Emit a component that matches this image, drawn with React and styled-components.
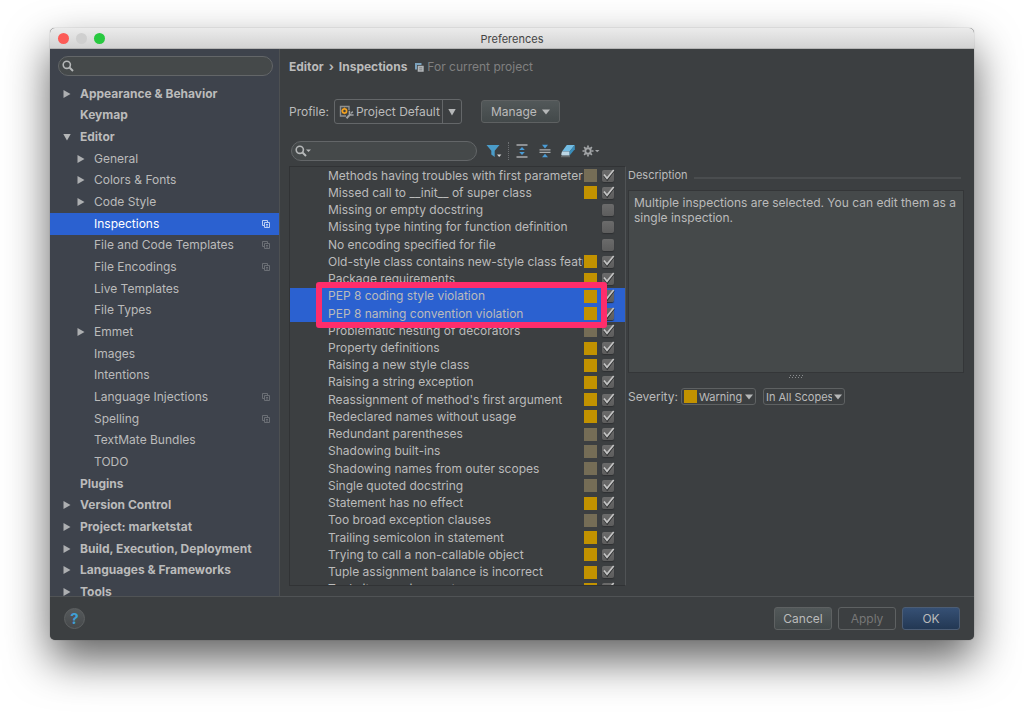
import React, { useState } from "react"
import styled, { createGlobalStyle } from "styled-components"

const GlobalStyle = createGlobalStyle`
  * {
    box-sizing: border-box;
  }

  body {
    margin: 0;
    background: #fff;
    color: #bbb;
    font-family: Inter, "Liberation Sans", sans-serif;
    font-size: 12px;
    line-height: 16px;
  }

  button,
  input,
  select {
    margin: 0;
    color: inherit;
    font: inherit;
  }

  svg {
    display: block;
    flex: none;
  }
`

const Page = styled.div`
  display: flex;
  height: 100vh;
  min-height: 480px;
  padding: 28px 50px 72px;
`

const Window = styled.main`
  display: flex;
  flex: 1;
  flex-direction: column;
  min-width: 0;
  overflow: hidden;
  border-radius: 5px;
  background: #3c3f41;
  box-shadow: 0 0 1px rgba(0, 0, 0, 0.5), 0 20px 44px rgba(0, 0, 0, 0.62);
`

const TitleBar = styled.header`
  display: grid;
  grid-template-columns: 1fr auto 1fr;
  align-items: center;
  height: 21px;
  padding: 1px 8px 0;
  border-bottom: 1px solid #b4b4b4;
  background: linear-gradient(#ebebeb, #d3d3d3);
`

const Lights = styled.div`
  display: flex;
  gap: 7px;
`

const Light = styled.button`
  width: 11px;
  height: 11px;
  padding: 0;
  border: 0;
  border-radius: 50%;
  background: ${({ $color }) => $color};
`

const Title = styled.h1`
  margin: 0;
  color: #444;
  font-size: 11px;
  font-weight: 400;
`

const Body = styled.div`
  display: flex;
  flex: 1;
  min-height: 0;
`

const Sidebar = styled.nav`
  display: flex;
  flex: 0 0 230px;
  flex-direction: column;
  gap: 7px;
  padding-top: 7px;
  overflow: hidden;
  border-right: 1px solid #4d5052;
  background: #3e434c;
`

const SearchBox = styled.label`
  display: flex;
  align-items: center;
  flex: none;
  gap: 4px;
  width: ${({ $width }) => $width || "auto"};
  height: 20px;
  margin: ${({ $margin }) => $margin || 0};
  padding: 0 3px;
  border: 1px solid #636668;
  border-radius: 10px;
  background: #45494a;

  input {
    flex: 1;
    min-width: 0;
    padding: 0;
    border: 0;
    outline: 0;
    background: none;
  }
`

const TreeScroll = styled.div`
  flex: 1;
  min-height: 0;
  overflow: hidden;
`

const Tree = styled.ul`
  display: grid;
  grid-auto-rows: 1fr;
  height: calc(100% + 7px);
  margin: 0;
  padding: 0;
  list-style: none;
`

const TreeRow = styled.button`
  display: flex;
  align-items: center;
  width: 100%;
  height: 100%;
  padding: 0 8px 0 ${({ $level }) => ($level ? 27 : 13)}px;
  border: 0;
  background: ${({ $selected }) => ($selected ? "#2b61d0" : "none")};
  color: ${({ $selected }) => ($selected ? "#fff" : "#bbb")};
  font-weight: ${({ $level }) => ($level ? 400 : 700)};
  text-align: left;

  svg:last-child {
    color: ${({ $selected }) => ($selected ? "#b9cdf3" : "#6b6f75")};
  }
`

const ArrowSlot = styled.span`
  flex: none;
  width: 17px;
`

const TreeLabel = styled.span`
  flex: 1;
  white-space: nowrap;
`

const Content = styled.section`
  display: flex;
  flex: 1;
  flex-direction: column;
  min-width: 0;
  padding: 9px 10px 10px 9px;
`

const Breadcrumb = styled.h2`
  display: flex;
  align-items: center;
  gap: 5px;
  margin: 0;
  font-size: 12px;
  font-weight: 700;
  line-height: 18px;
`

const Scope = styled.span`
  display: flex;
  align-items: center;
  gap: 3px;
  margin-left: 3px;
  color: #808080;
  font-weight: 400;
`

const ProfileRow = styled.div`
  display: flex;
  align-items: center;
  gap: 5px;
  margin-top: 23px;
`

const ProfileSelect = styled.div`
  display: flex;
  align-items: center;
  height: 25px;
  margin-right: 14px;
  padding-left: 4px;
  border: 1px solid #646769;
  border-radius: 3px;

  select {
    appearance: none;
    width: 88px;
    padding: 0 0 0 2px;
    border: 0;
    outline: 0;
    background: none;
  }
`

const ArrowBox = styled.span`
  display: flex;
  align-items: center;
  justify-content: center;
  width: 19px;
  height: 100%;
  border-left: 1px solid #646769;
`

const Button = styled.button`
  display: flex;
  align-items: center;
  justify-content: center;
  gap: 5px;
  min-width: ${({ $width }) => $width}px;
  height: 23px;
  padding: 0 8px;
  border: 1px solid ${({ $primary }) => ($primary ? "#4c5d75" : "#5e6162")};
  border-radius: 3px;
  background: ${({ $primary, disabled }) =>
    disabled
      ? "none"
      : $primary
      ? "linear-gradient(#365074, #233854)"
      : "linear-gradient(#525859, #43494a)"};
  color: ${({ disabled }) => (disabled ? "#777" : "#bbb")};
`

const Toolbar = styled.div`
  display: flex;
  align-items: center;
  margin-top: 17px;
  padding-left: 2px;
`

const ToolButton = styled.button`
  display: flex;
  align-items: center;
  justify-content: center;
  width: 23px;
  height: 20px;
  padding: 0;
  border: 0;
  background: none;
`

const ToolGroup = styled.div`
  display: flex;
  align-items: center;
  margin-left: 5px;
`

const ToolSeparator = styled.span`
  height: 18px;
  margin: 0 1px 0 3px;
  border-left: 1px dotted #6c6f71;
`

const Panels = styled.div`
  display: flex;
  flex: 1;
  gap: 2px;
  min-height: 0;
  margin-top: 5px;
`

const ListFrame = styled.div`
  flex: 0 0 337px;
  overflow: hidden;
  border: 1px solid #313335;
  border-right-color: #505355;
`

const InspectionList = styled.ul`
  position: relative;
  display: grid;
  grid-template-rows: repeat(${({ $count }) => $count}, 1fr);
  grid-template-columns: minmax(0, 1fr);
  height: calc(100% + 13px);
  margin: 0;
  padding: 0;
  list-style: none;
`

const InspectionRow = styled.li`
  display: flex;
  align-items: center;
  min-height: 0;
  padding: 0 10px 0 38px;
  background: ${({ $selected }) => ($selected ? "#2b61d0" : "none")};

  label {
    display: flex;
    align-items: center;
    flex: 1;
    gap: 1px;
    min-width: 0;
  }
`

const InspectionName = styled.span`
  flex: 1;
  overflow: hidden;
  white-space: nowrap;
`

const Swatch = styled.span`
  flex: none;
  width: 13px;
  height: 13px;
  background: ${({ $level }) =>
    ({ warning: "#c29200", weak: "#756d56" }[$level] || "none")};
`

const Check = styled.span`
  display: grid;
  flex: none;
  margin-left: 3px;

  input,
  svg {
    grid-area: 1 / 1;
  }

  input {
    appearance: none;
    width: 12px;
    height: 12px;
    margin: 1px;
    border-radius: 2px;
    background: linear-gradient(#6b6b6b, #5d5d5d);
    box-shadow: 0 1px 1px #2e3032;
  }

  svg {
    z-index: 1;
    pointer-events: none;
  }
`

const Highlight = styled.li`
  position: absolute;
  z-index: 2;
  grid-row: ${({ $from }) => $from} / span 2;
  inset: -6px 18px -6px 26px;
  border: 6px solid #ff2d6b;
  border-radius: 3px;
  pointer-events: none;
`

const Details = styled.div`
  display: flex;
  flex: 1;
  flex-direction: column;
  min-width: 0;
  padding-top: 1px;
`

const GroupTitle = styled.h3`
  display: flex;
  align-items: center;
  gap: 6px;
  margin: 0 3px 7px 0;
  font-size: 11px;
  font-weight: 400;

  &::after {
    flex: 1;
    height: 2px;
    margin-top: 5px;
    background: #4a4d4f;
    content: "";
  }
`

const Description = styled.div`
  height: 183px;
  padding: 4px 5px;
  border: 1px solid #343638;
  background: #45494a;
  line-height: 15px;
`

const Grip = styled.div`
  align-self: center;
  padding-top: 1px;
`

const SeverityRow = styled.div`
  display: flex;
  align-items: center;
  gap: 3px;
  margin-top: 9px;
`

const SmallSelect = styled.span`
  display: flex;
  align-items: center;
  gap: 2px;
  height: 17px;
  margin-right: 4px;
  padding: 0 2px;
  border: 1px solid #5e6162;
  border-radius: 3px;
  font-size: 11px;

  select {
    appearance: none;
    width: ${({ $width }) => $width}px;
    padding: 0;
    border: 0;
    outline: 0;
    background: none;
  }
`

const Footer = styled.footer`
  display: flex;
  align-items: center;
  gap: 6px;
  flex: none;
  height: 44px;
  padding: 0 14px;
  border-top: 1px solid #505355;
`

const HelpButton = styled.button`
  width: 21px;
  height: 21px;
  margin-right: auto;
  padding: 0;
  border: 1px solid #5e6162;
  border-radius: 50%;
  background: linear-gradient(#55595b, #46494b);
  color: #3f9fd6;
  font-size: 15px;
  font-weight: 700;
  line-height: 18px;
`

const SearchIcon = ({ menu }) => (
  <svg width={menu ? 17 : 12} height="12" viewBox={menu ? "0 0 17 12" : "0 0 12 12"}>
    <circle cx="4.8" cy="4.8" r="3.6" fill="none" stroke="#b5b7b8" strokeWidth="1.6" />
    <path d="M7.5 7.5L11 11" stroke="#b5b7b8" strokeWidth="2" />
    {menu && <path d="M11 4.5h5L13.5 7z" fill="#b5b7b8" />}
  </svg>
)

const RightArrow = () => (
  <svg width="8" height="8" viewBox="0 0 8 8">
    <path d="M0.5 0L7.5 4L0.5 8z" fill="#adafb1" />
  </svg>
)

const DownArrow = ({ flat }) => (
  <svg width="8" height="8" viewBox="0 0 8 8">
    <path d={flat ? "M0 1.5h8L4 6.5z" : "M0.3 1h7.4L4 7.5z"} fill="#b5b7b8" />
  </svg>
)

const CopyIcon = () => (
  <svg width="10" height="10" viewBox="0 0 10 10" fill="none" stroke="currentColor">
    <path d="M3 6.5H1.5V1.5H6.5V3" />
    <path d="M3.5 3.5H8.5V8.5H3.5zM5 5.5h2M5 7h2" />
  </svg>
)

const ProjectIcon = () => (
  <svg width="9" height="9" viewBox="0 0 9 9">
    <path d="M0 0h6.5v6.5H0z" fill="#7ba2bd" />
    <path d="M2 2h7v7H2z" fill="#3c3f41" />
    <path d="M2.7 2.7h6v6h-6z" fill="#b2b6b8" />
    <path d="M4.2 4.8h3M4.2 6.8h3" stroke="#6d7072" strokeWidth="0.8" />
  </svg>
)

const ProfileIcon = () => (
  <svg width="15" height="14" viewBox="0 0 15 14" fill="none">
    <path d="M7 11H1.5V1.5H10V5" stroke="#8d9092" strokeWidth="1.4" />
    <circle cx="5.5" cy="5.9" r="2.1" stroke="#f0a020" strokeWidth="1.7" />
    <path d="M5.5 2.6v1M5.5 8.2v1M2.4 5.9h1" stroke="#f0a020" />
    <path d="M7.5 13.2L11 9.5" stroke="#a0a3a5" strokeWidth="2" />
    <path d="M10.4 5.8V8.6L11.8 10H14.6M12 8.2l1.8-1.6" stroke="#a0a3a5" strokeWidth="1.5" />
  </svg>
)

const FilterIcon = () => (
  <svg width="16" height="14" viewBox="0 0 16 14">
    <path d="M0.5 1h13L8.7 6.8V13L5.3 10.5V6.8z" fill="#4a9cc9" />
    <path d="M11 10.5h4.4L13.2 13z" fill="#d8dadb" />
  </svg>
)

const ExpandIcon = () => (
  <svg width="14" height="14" viewBox="0 0 14 14">
    <path d="M1.5 1h11M1.5 13h11" stroke="#a9acae" strokeWidth="1.4" />
    <path d="M7 2.9l2.8 3.1H4.2zM7 11.1L4.2 8h5.6z" fill="#4a9cd6" />
  </svg>
)

const CollapseIcon = () => (
  <svg width="14" height="14" viewBox="0 0 14 14">
    <path d="M1.5 5.8h11M1.5 8.4h11" stroke="#a9acae" strokeWidth="1.3" />
    <path d="M4 0.8h6L7 4.5zM4 13.3h6L7 9.7z" fill="#4a9cd6" />
  </svg>
)

const EraserIcon = () => (
  <svg width="16" height="14" viewBox="0 0 16 14">
    <path d="M6.8 1H14.8L9.6 7.5H2z" fill="#72bce3" />
    <path d="M2 7.5H9.6V11.5H2.2Q1 11.5 1.3 10z" fill="#bcd6e4" />
    <path d="M9.6 7.5L14.8 1V5.2L9.6 11.5z" fill="#3a8dba" />
    <path d="M1 12.7h9" stroke="#6d7173" />
  </svg>
)

const GearIcon = () => (
  <svg width="18" height="12" viewBox="0 0 18 12" fill="none" stroke="#a2a5a7">
    <circle cx="6" cy="6" r="2.7" strokeWidth="1.9" />
    <path
      d="M6 .5v2M6 9.5v2M.5 6h2M9.5 6h2M2.1 2.1l1.5 1.5M8.4 8.4l1.5 1.5M2.1 9.9l1.5-1.5M8.4 3.6l1.5-1.5"
      strokeWidth="1.7"
    />
    <path d="M13 5h4.5L15.2 7.3z" fill="#a2a5a7" stroke="none" />
  </svg>
)

const CheckMark = () => (
  <svg width="14" height="14" viewBox="0 0 14 14" fill="none">
    <path d="M3.2 6.7L6.2 10.5L13 1.5" stroke="#2d2f30" strokeWidth="2" />
    <path d="M3 5.5L6 9.3L12.7 1" stroke="#c4c4c4" strokeWidth="1.7" />
  </svg>
)

const GripDots = () => (
  <svg width="14" height="5" viewBox="0 0 14 5">
    <path d="M0 3.5h13M1 1.5h13" stroke="#8a8d8f" strokeDasharray="1 2" />
  </svg>
)

const settings = [
  { name: "Appearance & Behavior", arrow: "right" },
  { name: "Keymap" },
  { name: "Editor", arrow: "down" },
  { name: "General", level: 1, arrow: "right" },
  { name: "Colors & Fonts", level: 1, arrow: "right" },
  { name: "Code Style", level: 1, arrow: "right" },
  { name: "Inspections", level: 1, project: true },
  { name: "File and Code Templates", level: 1, project: true },
  { name: "File Encodings", level: 1, project: true },
  { name: "Live Templates", level: 1 },
  { name: "File Types", level: 1 },
  { name: "Emmet", level: 1, arrow: "right" },
  { name: "Images", level: 1 },
  { name: "Intentions", level: 1 },
  { name: "Language Injections", level: 1, project: true },
  { name: "Spelling", level: 1, project: true },
  { name: "TextMate Bundles", level: 1 },
  { name: "TODO", level: 1 },
  { name: "Plugins" },
  { name: "Version Control", arrow: "right" },
  { name: "Project: marketstat", arrow: "right" },
  { name: "Build, Execution, Deployment", arrow: "right" },
  { name: "Languages & Frameworks", arrow: "right" },
  { name: "Tools", arrow: "right" },
]

const inspections = [
  ["Methods having troubles with first parameter", "weak"],
  ["Missed call to __init__ of super class", "warning"],
  ["Missing or empty docstring", null],
  ["Missing type hinting for function definition", null],
  ["No encoding specified for file", null],
  ["Old-style class contains new-style class features", "warning"],
  ["Package requirements", "warning"],
  ["PEP 8 coding style violation", "warning"],
  ["PEP 8 naming convention violation", "warning"],
  ["Problematic nesting of decorators", "weak"],
  ["Property definitions", "warning"],
  ["Raising a new style class", "warning"],
  ["Raising a string exception", "warning"],
  ["Reassignment of method's first argument", "warning"],
  ["Redeclared names without usage", "warning"],
  ["Redundant parentheses", "weak"],
  ["Shadowing built-ins", "weak"],
  ["Shadowing names from outer scopes", "weak"],
  ["Single quoted docstring", "weak"],
  ["Statement has no effect", "warning"],
  ["Too broad exception clauses", "weak"],
  ["Trailing semicolon in statement", "warning"],
  ["Trying to call a non-callable object", "warning"],
  ["Tuple assignment balance is incorrect", "warning"],
  ["Tuple item assignment", "warning"],
]

const SettingsTree = () => {
  const [selected, setSelected] = useState("Inspections")

  return (
    <Sidebar>
      <SearchBox $margin="0 6px 0 8px">
        <SearchIcon />
        <input type="text" aria-label="Search settings" />
      </SearchBox>
      <TreeScroll>
        <Tree>
          {settings.map(({ name, level, arrow, project }) => (
            <li key={name}>
              <TreeRow
                $level={level}
                $selected={name === selected}
                onClick={() => setSelected(name)}
              >
                <ArrowSlot>
                  {arrow === "right" && <RightArrow />}
                  {arrow === "down" && <DownArrow />}
                </ArrowSlot>
                <TreeLabel>{name}</TreeLabel>
                {project && <CopyIcon />}
              </TreeRow>
            </li>
          ))}
        </Tree>
      </TreeScroll>
    </Sidebar>
  )
}

const Inspections = () => {
  const [enabled, setEnabled] = useState(inspections.map(([, level]) => Boolean(level)))
  const toggle = index =>
    setEnabled(enabled.map((value, i) => (i === index ? !value : value)))

  return (
    <ListFrame>
      <InspectionList $count={inspections.length}>
        {inspections.map(([name, level], index) => (
          <InspectionRow key={name} $selected={name.startsWith("PEP 8")}>
            <label>
              <InspectionName>{name}</InspectionName>
              <Swatch $level={level} />
              <Check>
                <input
                  type="checkbox"
                  checked={enabled[index]}
                  onChange={() => toggle(index)}
                />
                {enabled[index] && <CheckMark />}
              </Check>
            </label>
          </InspectionRow>
        ))}
        <Highlight $from={8} aria-hidden="true" />
      </InspectionList>
    </ListFrame>
  )
}

const InspectionDetails = () => (
  <Details>
    <GroupTitle>Description</GroupTitle>
    <Description>
      Multiple inspections are selected. You can edit them as a single inspection.
    </Description>
    <Grip>
      <GripDots />
    </Grip>
    <SeverityRow>
      <label htmlFor="severity">Severity:</label>
      <SmallSelect $width={44}>
        <Swatch $level="warning" />
        <select id="severity">
          <option>Warning</option>
        </select>
        <DownArrow flat />
      </SmallSelect>
      <SmallSelect $width={66}>
        <select aria-label="Scope">
          <option>In All Scopes</option>
        </select>
        <DownArrow flat />
      </SmallSelect>
    </SeverityRow>
  </Details>
)

const App = () => (
  <Page>
    <GlobalStyle />
    <Window>
      <TitleBar>
        <Lights>
          <Light $color="#fc5b57" aria-label="Close" />
          <Light $color="#cfcfcf" aria-label="Minimize" />
          <Light $color="#28c940" aria-label="Zoom" />
        </Lights>
        <Title>Preferences</Title>
      </TitleBar>
      <Body>
        <SettingsTree />
        <Content>
          <Breadcrumb>
            <span>Editor</span>
            <span>›</span>
            <span>Inspections</span>
            <Scope>
              <ProjectIcon />
              For current project
            </Scope>
          </Breadcrumb>
          <ProfileRow>
            <label htmlFor="profile">Profile:</label>
            <ProfileSelect>
              <ProfileIcon />
              <select id="profile">
                <option>Project Default</option>
              </select>
              <ArrowBox>
                <DownArrow />
              </ArrowBox>
            </ProfileSelect>
            <Button $width={79}>
              Manage
              <DownArrow flat />
            </Button>
          </ProfileRow>
          <Toolbar>
            <SearchBox $width="186px">
              <SearchIcon menu />
              <input type="text" aria-label="Search inspections" />
            </SearchBox>
            <ToolGroup>
              <ToolButton aria-label="Filter">
                <FilterIcon />
              </ToolButton>
              <ToolSeparator />
              <ToolButton aria-label="Expand all">
                <ExpandIcon />
              </ToolButton>
              <ToolButton aria-label="Collapse all">
                <CollapseIcon />
              </ToolButton>
              <ToolButton aria-label="Reset">
                <EraserIcon />
              </ToolButton>
              <ToolButton aria-label="Options">
                <GearIcon />
              </ToolButton>
            </ToolGroup>
          </Toolbar>
          <Panels>
            <Inspections />
            <InspectionDetails />
          </Panels>
        </Content>
      </Body>
      <Footer>
        <HelpButton aria-label="Help">?</HelpButton>
        <Button $width={58}>Cancel</Button>
        <Button $width={58} disabled>
          Apply
        </Button>
        <Button $width={58} $primary>
          OK
        </Button>
      </Footer>
    </Window>
  </Page>
)

export default App
